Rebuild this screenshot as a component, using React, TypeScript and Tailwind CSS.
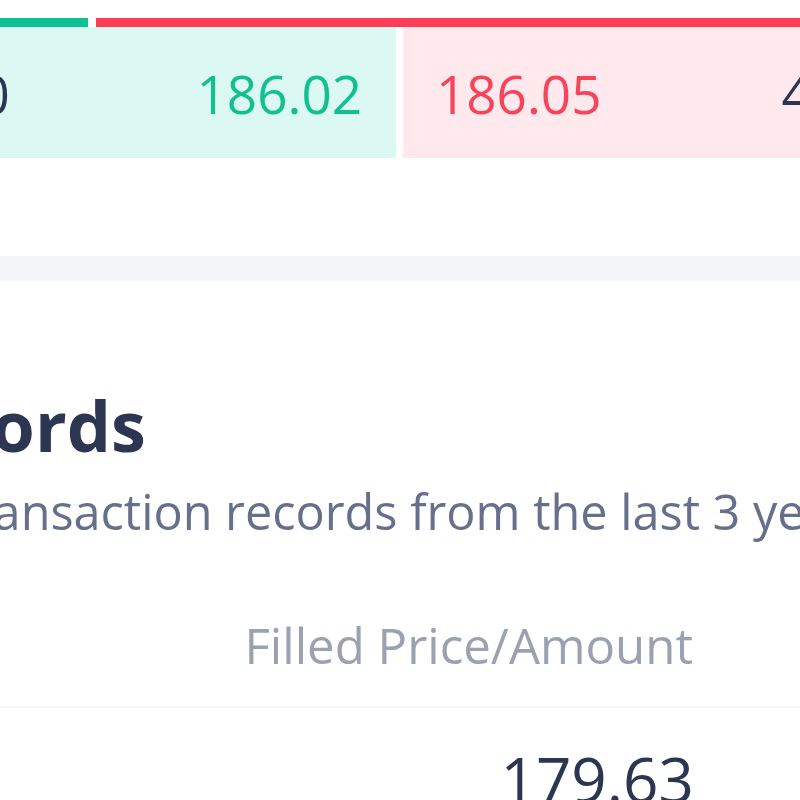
import React from 'react';

const font = { fontFamily: '"Open Sans", "Noto Sans", sans-serif' };

const OrderBook = () => {
  return (
    <div className="pt-[18px]">
      <div className="-ml-[117px] flex h-[9px] w-[1040px] gap-[8px]">
        <div className="w-[205px] bg-[#0cc193]" />
        <div className="flex-1 bg-[#ff3d57]" />
      </div>
      <div className="-ml-[117px] flex h-[131px] w-[1040px] gap-[7px]">
        <div className="flex w-[513px] items-center justify-between bg-[#dbf8f3] pl-[36px] pr-[34px] pt-[1px] text-[53px] leading-none">
          <span className="text-[#2c3552]">300</span>
          <span className="text-[#10c18f]">186.02</span>
        </div>
        <div className="flex flex-1 items-center bg-[#ffe9ec] pl-[33px] pt-[1px] text-[53px] leading-none">
          <span className="text-[#f5445b]">186.05</span>
          <span className="ml-[180px] text-[#2c3552]">4,100</span>
        </div>
      </div>
    </div>
  );
};

const Records = () => {
  return (
    <div className="pt-[109px]">
      <h2 className="-ml-[132px] whitespace-nowrap text-[70px] font-bold leading-none text-[#2c3552]">
        Records
      </h2>
      <p className="mt-[27px] -ml-[53px] whitespace-nowrap text-[48.6px] leading-none text-[#66708c]">
        Transaction records from the last 3 years
      </p>
      <div className="mt-[84px] w-[693px] text-right text-[49.2px] leading-none text-[#9ba1b1]">
        Filled Price/Amount
      </div>
      <div className="mt-[37px] h-[2px] w-full bg-[#f3f4f6]" />
      <div className="mt-[40px] w-[694px] text-right text-[62px] leading-none text-[#2c3552]">
        179.63
      </div>
    </div>
  );
};

export default function App() {
  return (
    <div className="h-[800px] w-[800px] overflow-hidden bg-white" style={font}>
      <OrderBook />
      <div className="mt-[98px] h-[25px] bg-[#f4f5f9]" />
      <Records />
    </div>
  );
}
